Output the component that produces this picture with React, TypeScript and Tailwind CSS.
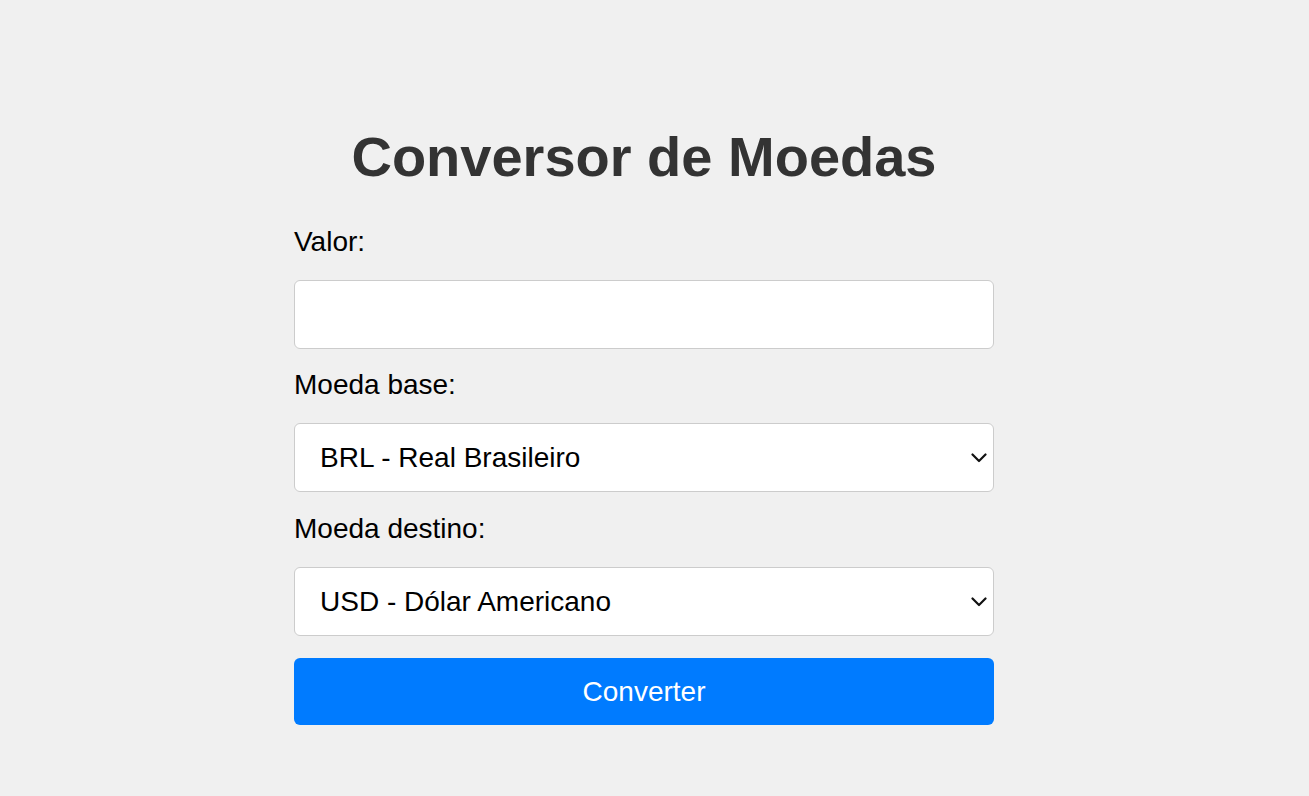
import { useState } from "react";

function Chevron() {
	return (
		<svg
			className="pointer-events-none absolute right-[7px] top-1/2 -translate-y-1/2"
			width="16"
			height="10"
			viewBox="0 0 16 10"
			fill="none"
		>
			<path
				d="M1.5 1.5 L8 8 L14.5 1.5"
				stroke="#111"
				strokeWidth="2.2"
				strokeLinecap="round"
				strokeLinejoin="round"
			/>
		</svg>
	);
}

export default function App() {
	const [valor, setValor] = useState("");
	const [base, setBase] = useState("BRL");
	const [destino, setDestino] = useState("USD");

	return (
		<div
			className="min-h-[796px] bg-[#f0f0f0] text-black"
			style={{ fontFamily: '"Liberation Sans", Arial, sans-serif' }}
		>
			<div className="ml-[294px] w-[700px] pt-[125px]">
				<h1 className="text-center text-[56px] leading-[64px] font-bold text-[#333]">
					Conversor de Moedas
				</h1>
				<form
					className="mt-[37px] flex flex-col"
					onSubmit={(e) => e.preventDefault()}
				>
					<label className="block text-[28px] leading-[32px] mb-[22px]">
						Valor:
					</label>
					<input
						type="number"
						value={valor}
						onChange={(e) => setValor(e.target.value)}
						className="h-[69px] w-full rounded-[6px] border border-[#ccc] bg-white px-[25px] text-[28px] outline-none mb-[20px]"
					/>
					<label className="block text-[28px] leading-[32px] mb-[22px]">
						Moeda base:
					</label>
					<div className="relative mb-[21px]">
						<select
							value={base}
							onChange={(e) => setBase(e.target.value)}
							className="h-[69px] w-full appearance-none rounded-[6px] border border-[#ccc] bg-white pl-[25px] text-[28px] outline-none"
						>
							<option value="BRL">BRL - Real Brasileiro</option>
							<option value="USD">USD - Dólar Americano</option>
							<option value="EUR">EUR - Euro</option>
						</select>
						<Chevron />
					</div>
					<label className="block text-[28px] leading-[32px] mb-[22px]">
						Moeda destino:
					</label>
					<div className="relative mb-[22px]">
						<select
							value={destino}
							onChange={(e) => setDestino(e.target.value)}
							className="h-[69px] w-full appearance-none rounded-[6px] border border-[#ccc] bg-white pl-[25px] text-[28px] outline-none"
						>
							<option value="USD">USD - Dólar Americano</option>
							<option value="BRL">BRL - Real Brasileiro</option>
							<option value="EUR">EUR - Euro</option>
						</select>
						<Chevron />
					</div>
					<button className="h-[67px] w-full rounded-[6px] bg-[#007bff] text-[28px] text-white">
						Converter
					</button>
				</form>
			</div>
		</div>
	);
}
